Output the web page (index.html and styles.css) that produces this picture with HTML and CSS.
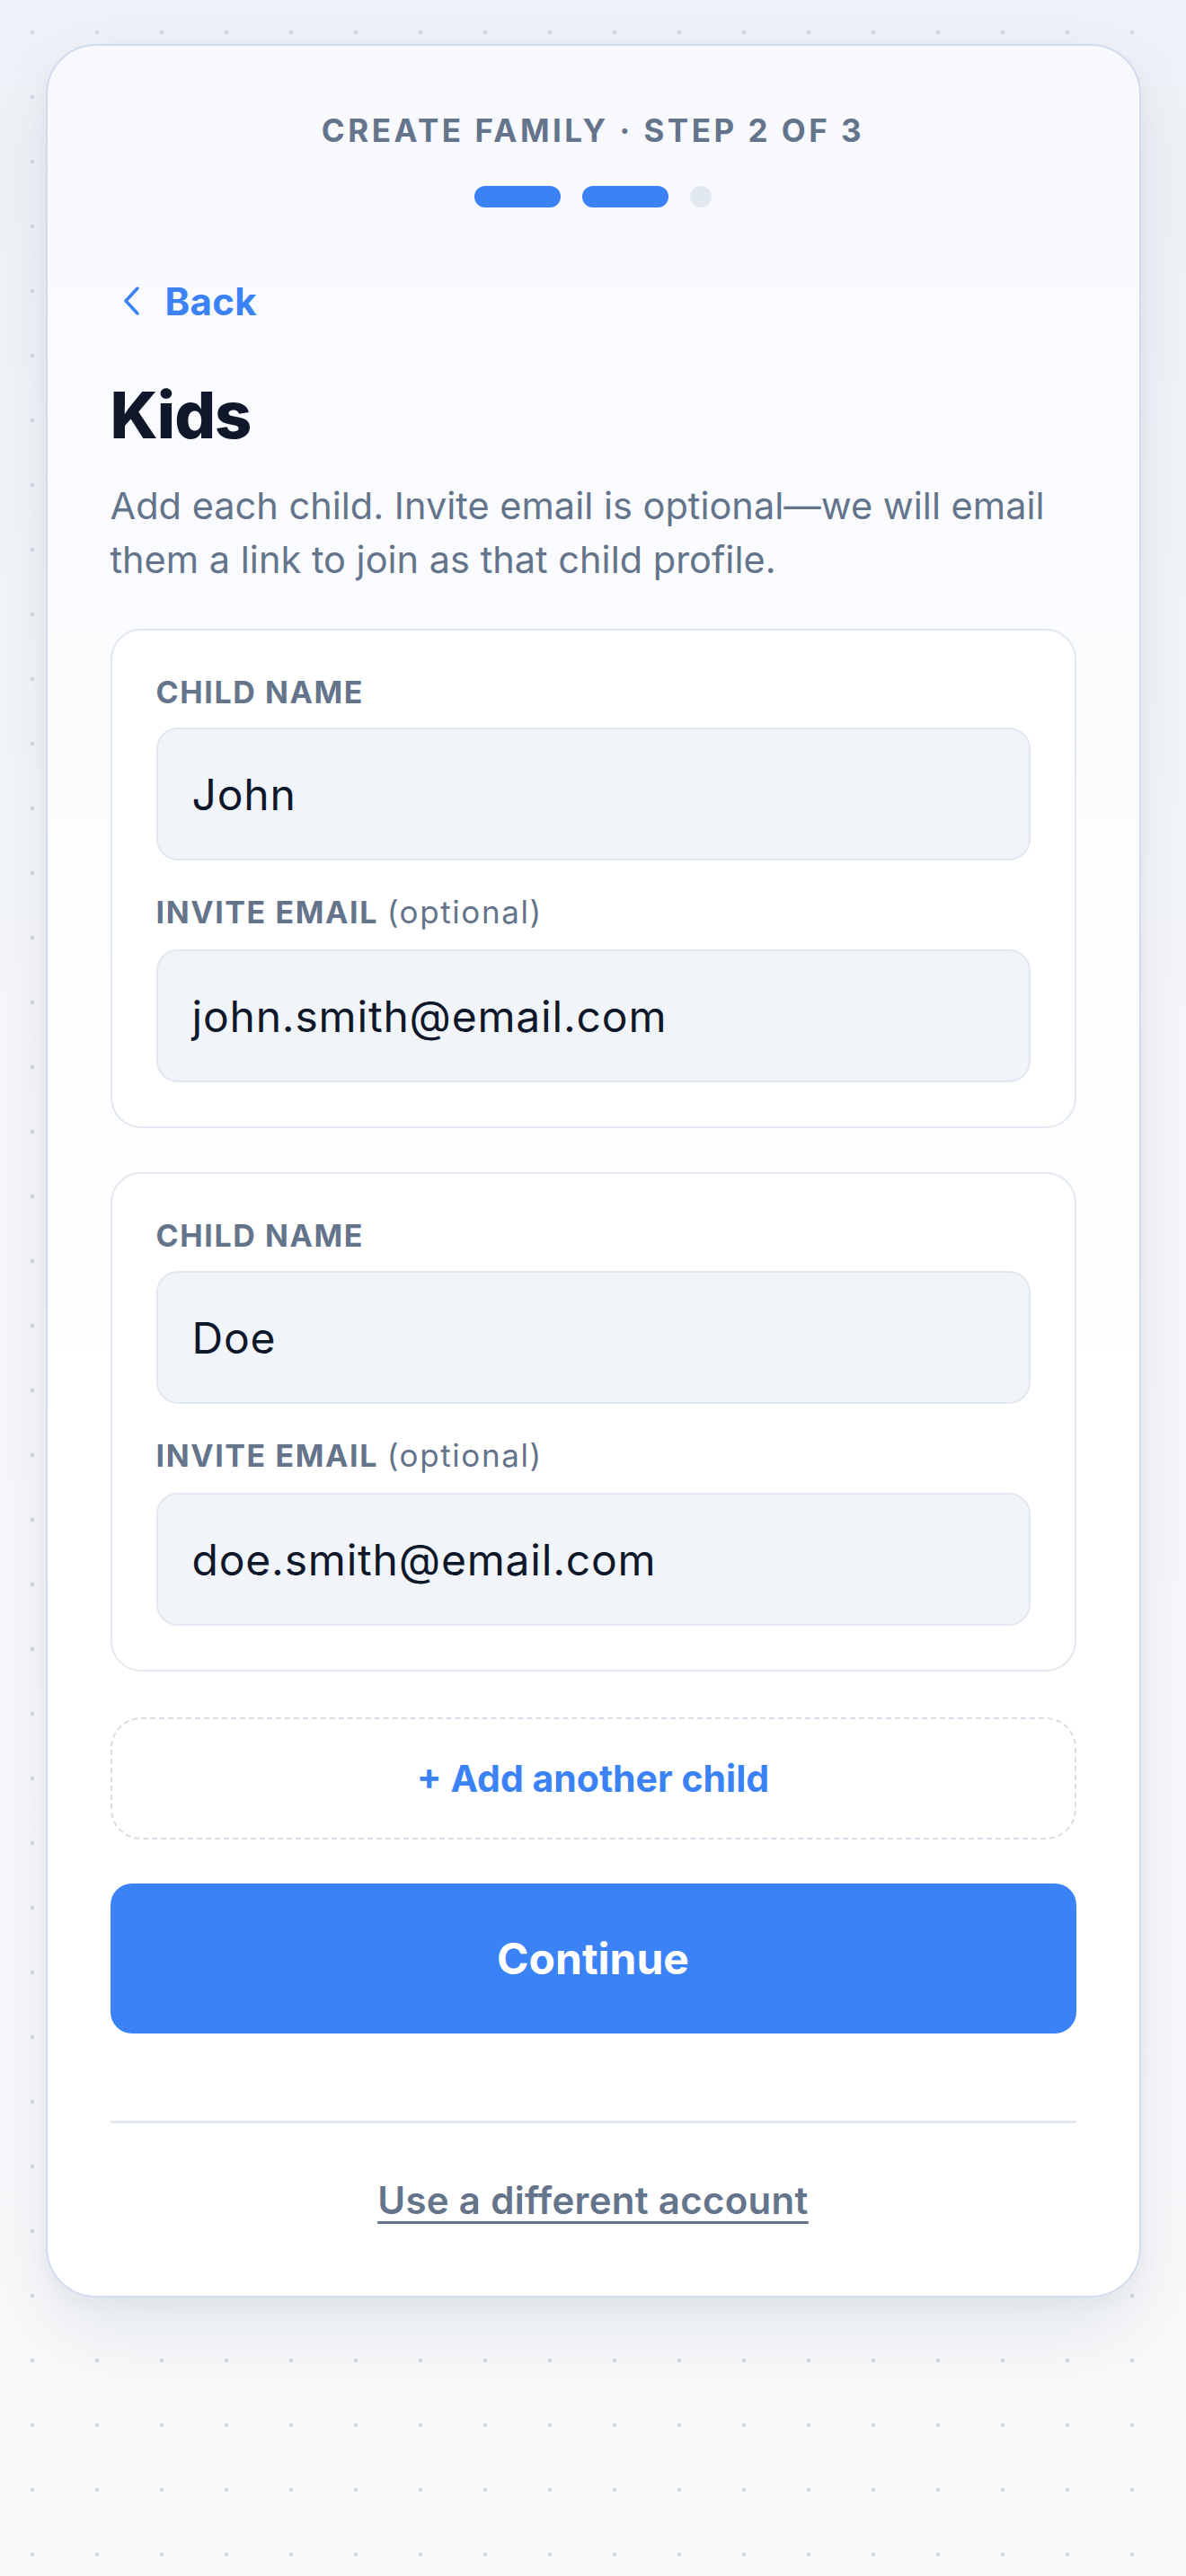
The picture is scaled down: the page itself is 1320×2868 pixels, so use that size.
FILE: index.html
```html
<!DOCTYPE html>
<html lang="en">
<head>
<meta charset="utf-8">
<title>Create family · Kids</title>
<link rel="stylesheet" href="styles.css">
</head>
<body>
<main class="card">
  <div class="step-label">CREATE FAMILY · STEP 2 OF 3</div>
  <div class="progress">
    <span class="pill pill-done"></span>
    <span class="pill pill-done"></span>
    <span class="pill pill-todo"></span>
  </div>

  <a class="back" href="#">
    <svg class="back-icon" viewBox="0 0 22 34" width="22" height="34" aria-hidden="true">
      <path d="M18 3 L5 17 L18 31" fill="none" stroke="#3b82f6" stroke-width="3.5" stroke-linecap="round" stroke-linejoin="round"/>
    </svg>
    <span>Back</span>
  </a>

  <h1 class="title">Kids</h1>
  <p class="desc">Add each child. Invite email is optional—we will email them a link to join as that child profile.</p>

  <section class="child">
    <label class="field-label">CHILD NAME</label>
    <div class="input">John</div>
    <label class="field-label field-label-gap">INVITE EMAIL <span class="opt">(optional)</span></label>
    <div class="input">john.smith@email.com</div>
  </section>

  <section class="child">
    <label class="field-label">CHILD NAME</label>
    <div class="input">Doe</div>
    <label class="field-label field-label-gap">INVITE EMAIL <span class="opt">(optional)</span></label>
    <div class="input">doe.smith@email.com</div>
  </section>

  <button class="add-child" type="button">+ Add another child</button>
  <button class="continue" type="button">Continue</button>

  <hr class="divider">
  <a class="switch" href="#">Use a different account</a>
</main>
</body>
</html>
```

FILE: styles.css
```css
html, body {
  margin: 0;
  padding: 0;
}

body {
  min-height: 2868px;
  box-sizing: border-box;
  padding-top: 49px;
  font-family: Inter, "Noto Sans", "DejaVu Sans", sans-serif;
  background-color: #f8fafc;
  background-image:
    radial-gradient(circle at 36px 36px, #d3d8e1 0, #d3d8e1 2px, transparent 2.6px),
    linear-gradient(180deg, #eef2f8 0%, #f6f8fb 40%, #f8fafc 100%);
  background-size: 72px 72px, 100% 100%;
  background-repeat: repeat, no-repeat;
}

.card {
  width: 1219px;
  margin: 0 auto;
  box-sizing: border-box;
  padding: 72px 70px 81px;
  border: 2px solid #cfdbee;
  border-radius: 56px;
  background: linear-gradient(180deg, #f7f9fd 0%, #ffffff 60%);
  box-shadow: 0 40px 90px rgba(15, 23, 42, 0.08), 0 8px 24px rgba(15, 23, 42, 0.04);
  display: flex;
  flex-direction: column;
}

.step-label {
  text-align: center;
  font-size: 35px;
  line-height: 44px;
  font-weight: 700;
  letter-spacing: 0.1em;
  color: #64748b;
}

.progress {
  margin-top: 40px;
  display: flex;
  justify-content: center;
  gap: 24px;
}

.pill {
  height: 24px;
  border-radius: 12px;
}

.pill-done {
  width: 96px;
  background: #3b82f6;
}

.pill-todo {
  width: 24px;
  background: #e2e8f0;
}

.back {
  margin-top: 79px;
  align-self: flex-start;
  display: flex;
  align-items: center;
  gap: 27px;
  padding-left: 12px;
  height: 50px;
  color: #3b82f6;
  text-decoration: none;
  font-size: 42px;
  font-weight: 700;
  letter-spacing: 0.3px;
}

.back-icon {
  display: block;
}

.title {
  margin: 59px 0 0;
  font-size: 72px;
  line-height: 86px;
  font-weight: 800;
  color: #0f172a;
  letter-spacing: -0.015em;
}

.desc {
  margin: 28px 0 0;
  font-size: 41.5px;
  line-height: 60px;
  color: #64748b;
  font-weight: 400;
}

.child {
  margin-top: 47px;
  border: 2px solid #e2e8f0;
  border-radius: 34px;
  background: #ffffff;
  padding: 49px 49px 49px;
  display: flex;
  flex-direction: column;
}

.child + .child {
  margin-top: 49px;
}

.field-label {
  height: 40px;
  font-size: 34px;
  line-height: 40px;
  font-weight: 700;
  letter-spacing: 1.6px;
  color: #64748b;
  margin-bottom: 19px;
}

.field-label-gap {
  margin-top: 38px;
  margin-bottom: 21px;
}

.opt {
  font-weight: 400;
  font-size: 35px;
  line-height: 1;
  letter-spacing: 1.6px;
}

.input {
  height: 148px;
  box-sizing: border-box;
  border: 2px solid #e2e8f0;
  border-radius: 24px;
  background: #f1f5f9;
  padding: 0 38px;
  display: flex;
  align-items: center;
  font-size: 48px;
  letter-spacing: 0.8px;
  color: #0f172a;
}

.add-child {
  margin-top: 51px;
  height: 136px;
  border: 2px dashed #d7dde6;
  border-radius: 34px;
  background: transparent;
  font-family: inherit;
  font-size: 41px;
  font-weight: 700;
  color: #3b82f6;
  cursor: pointer;
}

.continue {
  margin-top: 49px;
  height: 167px;
  border: none;
  border-radius: 24px;
  background: #3b82f6;
  font-family: inherit;
  font-size: 48px;
  font-weight: 700;
  color: #ffffff;
  cursor: pointer;
}

.divider {
  margin: 97px 0 0;
  border: none;
  height: 3px;
  background: #e2e8f0;
}

.switch {
  margin-top: 61px;
  align-self: center;
  font-size: 42px;
  line-height: 50px;
  font-weight: 600;
  letter-spacing: 0.3px;
  color: #64748b;
  text-decoration: underline;
  text-decoration-thickness: 3px;
  text-underline-offset: 8px;
}
```
